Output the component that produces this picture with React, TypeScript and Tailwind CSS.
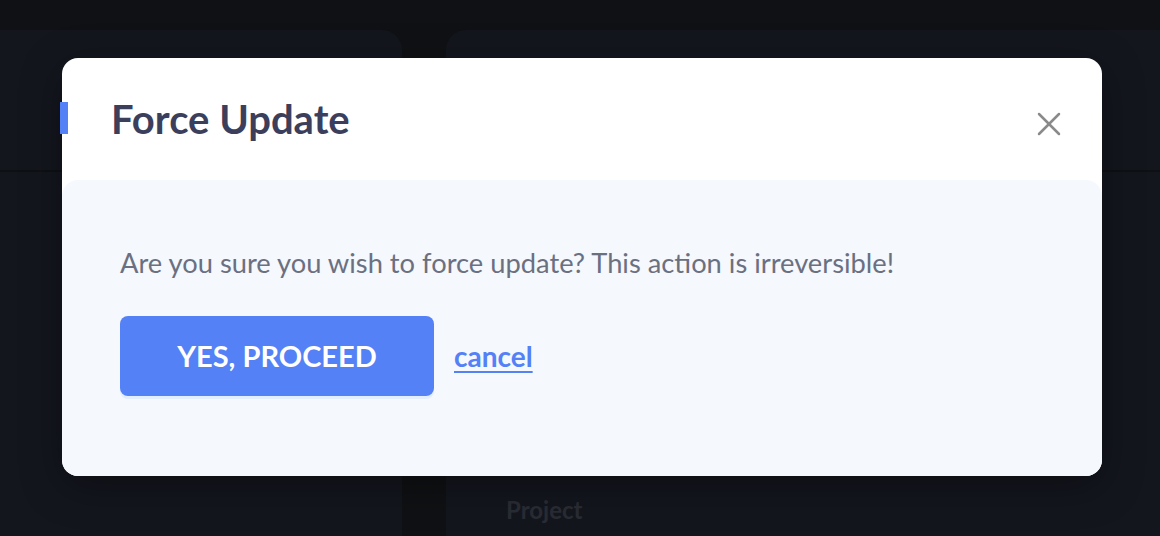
import React from 'react';
import { X } from 'lucide-react';

const font = { fontFamily: 'Lato, "Noto Sans", sans-serif' };

function Backdrop() {
  return (
    <div className="flex h-full gap-[44px] pt-[30px]">
      <div className="w-[402px] rounded-tr-[20px] bg-[#14161e]">
        <div className="h-[142px] border-b-2 border-[#0f1014]" />
      </div>
      <div className="flex-1 flex flex-col rounded-tl-[20px] bg-[#14161e]">
        <div className="h-[142px] border-b-2 border-[#0f1014]" />
        <div className="flex-1" />
        <div className="pl-[60px] pb-[8px] text-[24px] font-bold text-[#2a2c34]">Project</div>
      </div>
    </div>
  );
}

export default function App() {
  return (
    <div className="relative h-[536px] w-full overflow-hidden bg-[#101114]" style={font}>
      <Backdrop />

      <div className="absolute left-[62px] top-[58px] flex h-[418px] w-[1040px] flex-col rounded-2xl bg-white shadow-[0_10px_40px_rgba(0,0,0,0.35)]">
        <div className="relative flex h-[122px] shrink-0 items-center justify-between pl-[49px] pr-[33px]">
          <span className="absolute left-[-2px] top-[44px] h-[32px] w-[8px] bg-[#5481f5]" />
          <h2 className="text-[40px] leading-[48px] font-bold text-[#3b3f5c]">Force Update</h2>
          <button className="mt-[10px] text-[#8a8a8a]">
            <X size={40} strokeWidth={1.5} />
          </button>
        </div>

        <div className="flex flex-1 flex-col rounded-2xl bg-[#f5f8fd] px-[58px] pt-[65px]">
          <p className="text-[27.3px] leading-[36px] text-[#6b7081]">
            Are you sure you wish to force update? This action is irreversible!
          </p>
          <div className="mt-[35px] flex items-center gap-[20px]">
            <button className="h-[80px] w-[314px] rounded-lg bg-[#5481f5] text-[29px] font-bold text-white shadow-[0_3px_0_#e3edfd]">
              YES, PROCEED
            </button>
            <a href="#" className="text-[28px] font-bold text-[#5481f5] underline underline-offset-4">
              cancel
            </a>
          </div>
        </div>
      </div>
    </div>
  );
}
